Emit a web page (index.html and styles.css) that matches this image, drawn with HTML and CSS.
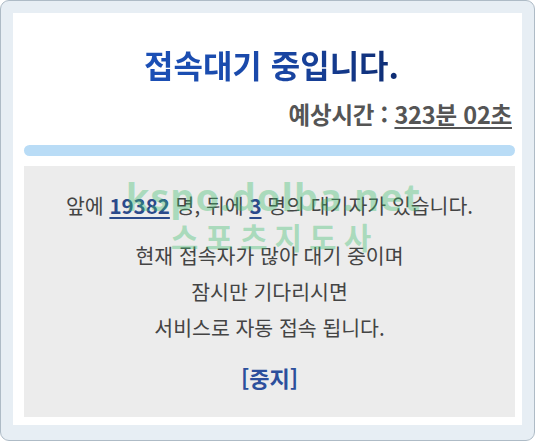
FILE: index.html
```html
<!DOCTYPE html>
<html lang="ko">
<head>
<meta charset="utf-8">
<link rel="stylesheet" href="styles.css">
</head>
<body>
<div class="frame">
  <div class="panel">
    <h1 class="title"><span class="title-text">접속대기 중입니다.</span></h1>
    <div class="eta">예상시간 : <span class="eta-val">323분 02초</span></div>
    <div class="bar"></div>
    <div class="box">
      <p class="line first">앞에 <span class="num">19382</span> 명, 뒤에 <span class="num">3</span> 명의 대기자가 있습니다.</p>
      <p class="line second">현재 접속자가 많아 대기 중이며</p>
      <p class="line">잠시만 기다리시면</p>
      <p class="line">서비스로 자동 접속 됩니다.</p>
      <p class="stop">[중지]</p>
      <div class="wm wm-en">kspo.dolba.net</div>
      <div class="wm wm-ko">스포츠지도사</div>
    </div>
  </div>
</div>
</body>
</html>
```
FILE: styles.css
```css
html, body {
  margin: 0;
  padding: 0;
  background: #ffffff;
}
body {
  font-family: "Noto Sans CJK KR", "Noto Sans", sans-serif;
  width: 535px;
  height: 441px;
  overflow: hidden;
}
.frame {
  box-sizing: border-box;
  width: 535px;
  height: 441px;
  background: #e7eef4;
  border: 1px solid #aebbc6;
  border-radius: 9px;
  padding: 12px 12px 15px 12px;
}
.panel {
  background: #ffffff;
  height: 100%;
  box-sizing: border-box;
  padding: 0 7px 8px 11px;
  display: flex;
  flex-direction: column;
}
.title {
  margin: 31px 0 0 0;
  text-align: center;
  font-size: 32px;
  line-height: 40px;
  font-weight: 700;
  color: #1a47a6;
  padding-left: 4px;
}
.title-text {
  background: linear-gradient(90deg, #1b50b6 0%, #1a48a8 50%, #0e2c72 100%);
  -webkit-background-clip: text;
  background-clip: text;
  color: transparent;
}
.eta {
  margin-top: 14px;
  text-align: right;
  padding-right: 3px;
  font-size: 23.5px;
  line-height: 32px;
  font-weight: 700;
  color: #555555;
  letter-spacing: -0.2px;
}
.eta-val {
  text-decoration: underline;
  text-decoration-thickness: 2px;
  text-underline-offset: 3px;
}
.bar {
  margin-top: 15px;
  height: 11px;
  border-radius: 6px;
  background: #b9dcf6;
}
.box {
  position: relative;
  margin-top: 10px;
  flex: 1;
  background: #ececec;
  text-align: center;
  color: #444444;
  padding-top: 21px;
  overflow: hidden;
}
.line {
  margin: 0;
  font-size: 20.5px;
  line-height: 36px;
}
.second {
  margin-top: 14px;
}
.num {
  color: #2b4a8b;
  font-weight: 700;
  text-decoration: underline;
  text-decoration-thickness: 2px;
  text-underline-offset: 3px;
}
.stop {
  margin: 15px 0 0 0;
  font-size: 22px;
  line-height: 34px;
  font-weight: 700;
  color: #2c4f9c;
}
.wm {
  position: absolute;
  left: 0;
  right: 0;
  text-align: center;
  color: rgba(60, 190, 110, 0.38);
  pointer-events: none;
  white-space: nowrap;
}
.wm-en {
  top: 8px;
  padding-left: 8px;
  font-size: 38px;
  line-height: 44px;
  font-weight: 700;
  letter-spacing: 1px;
  font-family: "Noto Sans", sans-serif;
}
.wm-ko {
  top: 52px;
  padding-left: 10px;
  font-size: 30px;
  line-height: 36px;
  font-weight: 700;
  letter-spacing: 7px;
}
```
